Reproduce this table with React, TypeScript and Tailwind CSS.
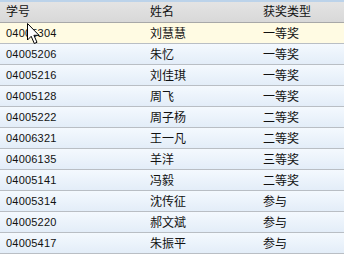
import React from "react";

const rows = [
  ["04005304", "刘慧慧", "一等奖"],
  ["04005206", "朱忆", "一等奖"],
  ["04005216", "刘佳琪", "一等奖"],
  ["04005128", "周飞", "一等奖"],
  ["04005222", "周子杨", "二等奖"],
  ["04006321", "王一凡", "二等奖"],
  ["04006135", "羊洋", "三等奖"],
  ["04005141", "冯毅", "二等奖"],
  ["04005314", "沈传征", "参与"],
  ["04005220", "郝文斌", "参与"],
  ["04005417", "朱振平", "参与"],
];

const font = "font-['Liberation_Sans','Noto_Sans_CJK_SC',sans-serif]";

export default function App() {
  return (
    <div className={`relative w-[344px] h-[254px] overflow-hidden bg-[#e6f0fa] text-[12px] text-[#111] ${font}`}>
      {/* header */}
      <div className="flex h-[23px] items-center border-t-2 border-t-[#bcd3ea] border-b border-b-[#a8a8a8] bg-gradient-to-b from-[#e4e4e4] to-[#d8d8d8]">
        <div className="w-[150px] pl-[6px]">学号</div>
        <div className="w-[113px]">姓名</div>
        <div className="flex-1">获奖类型</div>
      </div>
      {rows.map((r, i) => (
        <div
          key={r[0]}
          className={`flex h-[21px] items-center pt-[1px] border-b border-[#b9bec4] ${
            i === 0 ? "bg-[#fffbe3]" : "bg-gradient-to-b from-[#f4f9fe] to-[#e3edf8]"
          }`}
        >
          <div className="w-[150px] pl-[6px] text-[11px] tracking-[0.2px]">{r[0]}</div>
          <div className="w-[113px]">{r[1]}</div>
          <div className="flex-1">{r[2]}</div>
        </div>
      ))}
      {/* mouse cursor */}
      <svg className="absolute left-[27px] top-[23px]" width="14" height="23" viewBox="0 0 14 23">
        <path d="M0.5 0.5 L0.5 17 L4.2 13.3 L7.3 20.5 L10 19.3 L6.9 12.3 L12 12.3 Z" fill="#fff" stroke="#000" strokeWidth="1" />
      </svg>
    </div>
  );
}
